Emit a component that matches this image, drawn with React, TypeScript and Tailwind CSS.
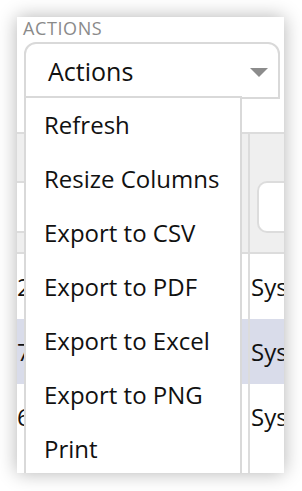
import React from "react";

const menuItems = [
  "Refresh",
  "Resize Columns",
  "Export to CSV",
  "Export to PDF",
  "Export to Excel",
  "Export to PNG",
  "Print",
];

const rows = [
  { id: "2458", source: "System", bg: "bg-white" },
  { id: "7312", source: "System", bg: "bg-[#d9dcea]" },
  { id: "6120", source: "System", bg: "bg-white" },
  { id: "1893", source: "System", bg: "bg-white" },
];

export default function App() {
  return (
    <div className="w-[302px] h-[491px] bg-white pt-[17px] pl-[17px] font-['Open_Sans',sans-serif]">
      <div className="relative w-[267px] h-[456px] overflow-hidden bg-white shadow-[0_0_18px_rgba(0,0,0,0.3)]">
        <div className="pl-[6px] text-[18px] leading-[22px] tracking-[0.6px] text-[#8a8a8a]">ACTIONS</div>

        <div className="ml-[7px] mr-[4px] mt-[3px] h-[57px] rounded-t-[12px] border-2 border-[#d9d9d9] flex items-center justify-between pl-[22px] pr-[10px]">
          <span className="text-[25px] leading-[34px] text-[#111]">Actions</span>
          <svg width="18" height="9" viewBox="0 0 18 9" className="mt-[4px]">
            <path d="M0 0 H18 L9 9 Z" fill="#8c8c8c" />
          </svg>
        </div>

        <div className="mt-[33px] -ml-[10px] border-t-2 border-[#dcdcdc]">
          <div className="bg-[#efefef] border-b-2 border-[#dcdcdc] grid grid-cols-[243px_1fr]">
            <div className="border-r-2 border-[#dcdcdc] pt-[47px] pb-[19px] pr-[16px]">
              <div className="h-[52px] rounded-[10px] border-2 border-[#dcdcdc] bg-white" />
            </div>
            <div className="pt-[47px] pb-[19px] pl-[7px]">
              <div className="h-[52px] rounded-l-[10px] border-2 border-r-0 border-[#dcdcdc] bg-white" />
            </div>
          </div>

          {rows.map((r) => (
            <div key={r.id} className={`grid grid-cols-[243px_1fr] h-[65px] ${r.bg}`}>
              <div className="border-r-2 border-[#dcdcdc] flex items-center pl-[10px] text-[24px] text-[#111]">
                {r.id}
              </div>
              <div className="flex items-center pl-[1px] text-[24px] text-[#111] whitespace-nowrap overflow-hidden">
                {r.source}
              </div>
            </div>
          ))}
        </div>

        <div className="absolute left-[7px] top-[79px] w-[218px] bg-white border-2 border-b-0 border-[#d9d9d9]">
          {menuItems.map((item) => (
            <div key={item} className="h-[54px] flex items-center pl-[18px] text-[24px] text-[#111] whitespace-nowrap">
              {item}
            </div>
          ))}
        </div>
      </div>
    </div>
  );
}
